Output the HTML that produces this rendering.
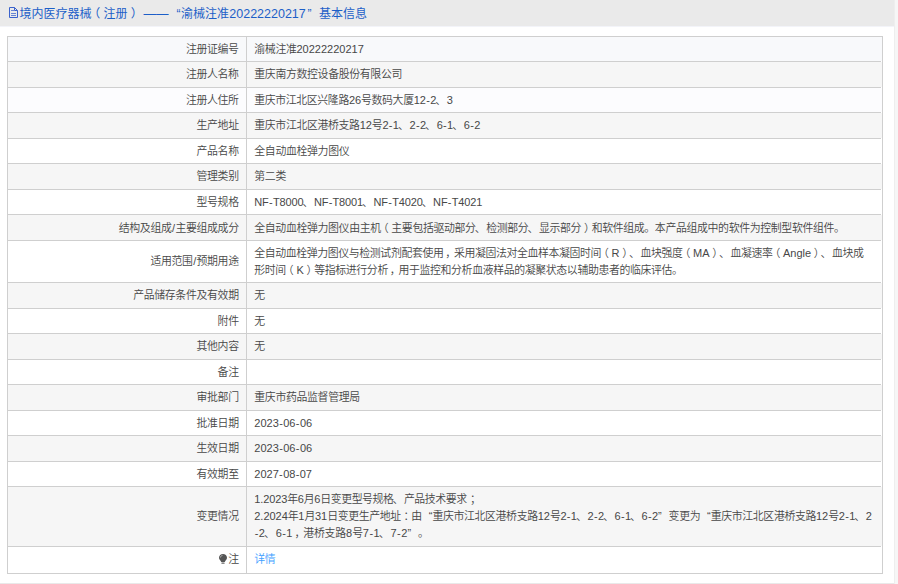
<!DOCTYPE html>
<html lang="zh-CN"><head><meta charset="utf-8"><title>基本信息</title>
<style>
html,body{margin:0;padding:0;background:#fff;}
body{width:898px;height:584px;position:relative;overflow:hidden;font-family:"Liberation Sans","Noto Sans CJK SC",sans-serif;font-size:10.9px;letter-spacing:-0.34px;font-weight:350;color:#474747;text-spacing-trim:space-all;}
.wrap{position:absolute;left:0;top:0;width:894px;height:583px;background:#fff;border-bottom:1px solid #e9e9e9;}
.edge{position:absolute;left:894px;top:0;width:3px;height:584px;background:#f6f6f6;border-left:1px solid #eeeeee;}
.hd{position:absolute;left:0;top:0;width:894px;height:26px;background:#eaeaea;border-bottom:1px solid #f3f4f9;}
.hd .t{position:absolute;left:0;top:0;height:26px;font-size:12px;letter-spacing:0;font-weight:400;color:#1c5fc8;white-space:nowrap;}
.hd .t>span{position:absolute;top:0.6px;transform:translateY(-0.5px);height:26px;line-height:26px;}
.ico{position:absolute;left:9px;top:7px;}
.row{position:absolute;left:7.9px;width:874.1px;}
.lab{position:absolute;left:0;top:0.6px;bottom:-0.6px;width:230.8px;text-align:right;white-space:nowrap;display:flex;align-items:center;justify-content:flex-end;line-height:17px;}
.val{position:absolute;left:246.4px;top:0.6px;bottom:-0.6px;right:0;white-space:nowrap;display:flex;align-items:center;line-height:17px;}
.ln{display:block;white-space:nowrap;}
.hl{position:absolute;height:1px;background:#cfcfcf;}
.vl{position:absolute;width:1px;background:#cfcfcf;}
.en{font-size:11px;}
.hy{padding:0 0.35px;}
.pl{position:relative;left:-0.28em;}
.pr{position:relative;left:0.26em;}
.dn{position:relative;left:-0.09em;}
.sc{position:relative;left:0.3em;}
.co{position:relative;left:0.25em;}
.cm{position:relative;left:0.17em;}
.sl{padding:0 0.6px;}
.lq{display:inline-block;width:10.56px;text-align:right;letter-spacing:0;}
.rq{display:inline-block;width:10.56px;text-align:left;letter-spacing:0;}
a{color:#409eff;text-decoration:none;}
.bulb{display:inline-block;margin-right:1.2px;position:relative;top:-0.7px;}
</style></head><body>
<div class="wrap"></div><div class="edge"></div>
<div class="hd"><svg class="ico" width="9" height="11" viewBox="0 0 9 11"><path d="M0.5 0.5H5.5L8.5 3.5V10.5H0.5Z M5.5 0.5V3.5H8.5" fill="none" stroke="#3a62cc" stroke-width="1"/><path d="M2 3.5H5M2 6.5H7M2 8.5H7" stroke="#3a62cc" stroke-width="1" fill="none" opacity="0.75"/></svg><div class="t"><span style="left:19.5px">境内医疗器械<span class="pl">（</span>注册<span class="pr">）</span></span><span style="left:143.4px;font-size:12.5px">——</span><span style="left:176.4px">“</span><span style="left:181.1px">渝械注准</span><span style="left:229.3px;font-size:12.5px">20222220217</span><span style="left:307.6px">”</span><span style="left:318.9px">基本信息</span></div></div>
<div class="row" style="top:36.9px;height:24.1px;background:#f8f9fb"><div class="lab">注册证编号</div><div class="val"><span class="tx"><span class="ln" id="l0_0" style="letter-spacing:-0.340px">渝械注准<span class="en" style="letter-spacing:0.000px">20222220217</span></span></span></div></div>
<div class="row" style="top:62.0px;height:24.8px;background:#f6f6f6"><div class="lab">注册人名称</div><div class="val"><span class="tx"><span class="ln" id="l1_0" style="letter-spacing:-0.340px">重庆南方数控设备股份有限公司</span></span></div></div>
<div class="row" style="top:87.8px;height:24.2px;background:#fcfcfe"><div class="lab">注册人住所</div><div class="val"><span class="tx"><span class="ln" id="l2_0" style="letter-spacing:-0.378px">重庆市江北区兴隆路<span class="en" style="letter-spacing:-0.038px">26</span>号数码大厦<span class="en" style="letter-spacing:-0.038px">12<span class="hy">-</span>2</span><span class="dn">、</span><span class="en" style="letter-spacing:-0.038px">3</span></span></span></div></div>
<div class="row" style="top:113.0px;height:24.7px;background:#f6f6f6"><div class="lab">生产地址</div><div class="val"><span class="tx"><span class="ln" id="l3_0" style="letter-spacing:-0.355px">重庆市江北区港桥支路<span class="en" style="letter-spacing:-0.015px">12</span>号<span class="en" style="letter-spacing:-0.015px">2<span class="hy">-</span>1</span><span class="dn">、</span><span class="en" style="letter-spacing:-0.015px">2<span class="hy">-</span>2</span><span class="dn">、</span><span class="en" style="letter-spacing:-0.015px">6<span class="hy">-</span>1</span><span class="dn">、</span><span class="en" style="letter-spacing:-0.015px">6<span class="hy">-</span>2</span></span></span></div></div>
<div class="row" style="top:138.7px;height:24.1px;background:#fff"><div class="lab">产品名称</div><div class="val"><span class="tx"><span class="ln" id="l4_0" style="letter-spacing:-0.340px">全自动血栓弹力图仪</span></span></div></div>
<div class="row" style="top:163.8px;height:25.2px;background:#f6f6f6"><div class="lab">管理类别</div><div class="val"><span class="tx"><span class="ln" id="l5_0" style="letter-spacing:-0.340px">第二类</span></span></div></div>
<div class="row" style="top:190.0px;height:24.0px;background:#fff"><div class="lab">型号规格</div><div class="val"><span class="tx"><span class="ln" id="l6_0" style="letter-spacing:-0.469px"><span class="en" style="letter-spacing:-0.129px">NF<span class="hy">-</span>T8000</span><span class="dn">、</span><span class="en" style="letter-spacing:-0.129px">NF<span class="hy">-</span>T8001</span><span class="dn">、</span><span class="en" style="letter-spacing:-0.129px">NF<span class="hy">-</span>T4020</span><span class="dn">、</span><span class="en" style="letter-spacing:-0.129px">NF<span class="hy">-</span>T4021</span></span></span></div></div>
<div class="row" style="top:215.0px;height:24.9px;background:#f6f6f6"><div class="lab">结构及组成<span class="sl">/</span>主要组成成分</div><div class="val"><span class="tx"><span class="ln" id="l7_0" style="letter-spacing:-0.351px">全自动血栓弹力图仪由主机<span class="pl">（</span>主要包括驱动部分<span class="dn">、</span>检测部分<span class="dn">、</span>显示部分<span class="pr">）</span>和软件组成。本产品组成中的软件为控制型软件组件。</span></span></div></div>
<div class="row" style="top:240.9px;height:40.9px;background:#fff"><div class="lab">适用范围<span class="sl">/</span>预期用途</div><div class="val"><span class="tx"><span class="ln" id="l8_0" style="letter-spacing:-0.383px">全自动血栓弹力图仪与检测试剂配套使用<span class="cm">，</span>采用凝固法对全血样本凝固时间<span class="pl">（</span><span class="en" style="letter-spacing:-0.043px">R</span><span class="pr">）</span><span class="dn">、</span>血块强度<span class="pl">（</span><span class="en" style="letter-spacing:-0.043px">MA</span><span class="pr">）</span><span class="dn">、</span>血凝速率<span class="pl">（</span><span class="en" style="letter-spacing:-0.043px">Angle</span><span class="pr">）</span><span class="dn">、</span>血块成</span><span class="ln" id="l8_1" style="letter-spacing:-0.365px">形时间<span class="pl">（</span><span class="en" style="letter-spacing:-0.025px">K</span><span class="pr">）</span>等指标进行分析<span class="cm">，</span>用于监控和分析血液样品的凝聚状态以辅助患者的临床评估。</span></span></div></div>
<div class="row" style="top:282.8px;height:25.2px;background:#f6f6f6"><div class="lab">产品储存条件及有效期</div><div class="val"><span class="tx"><span class="ln" id="l9_0" style="letter-spacing:-0.340px">无</span></span></div></div>
<div class="row" style="top:309.0px;height:23.9px;background:#fff"><div class="lab">附件</div><div class="val"><span class="tx"><span class="ln" id="l10_0" style="letter-spacing:-0.340px">无</span></span></div></div>
<div class="row" style="top:333.9px;height:24.9px;background:#f6f6f6"><div class="lab">其他内容</div><div class="val"><span class="tx"><span class="ln" id="l11_0" style="letter-spacing:-0.340px">无</span></span></div></div>
<div class="row" style="top:359.8px;height:24.0px;background:#fff"><div class="lab">备注</div><div class="val"><span class="tx"></span></div></div>
<div class="row" style="top:384.8px;height:25.2px;background:#f6f6f6"><div class="lab">审批部门</div><div class="val"><span class="tx"><span class="ln" id="l13_0" style="letter-spacing:-0.340px">重庆市药品监督管理局</span></span></div></div>
<div class="row" style="top:411.0px;height:24.0px;background:#fff"><div class="lab">批准日期</div><div class="val"><span class="tx"><span class="ln" id="l14_0" style="letter-spacing:-0.318px"><span class="en" style="letter-spacing:0.022px">2023<span class="hy">-</span>06<span class="hy">-</span>06</span></span></span></div></div>
<div class="row" style="top:436.0px;height:24.7px;background:#f6f6f6"><div class="lab">生效日期</div><div class="val"><span class="tx"><span class="ln" id="l15_0" style="letter-spacing:-0.318px"><span class="en" style="letter-spacing:0.022px">2023<span class="hy">-</span>06<span class="hy">-</span>06</span></span></span></div></div>
<div class="row" style="top:461.7px;height:24.2px;background:#fff"><div class="lab">有效期至</div><div class="val"><span class="tx"><span class="ln" id="l16_0" style="letter-spacing:-0.340px"><span class="en" style="letter-spacing:0.000px">2027<span class="hy">-</span>08<span class="hy">-</span>07</span></span></span></div></div>
<div class="row" style="top:486.9px;height:58.8px;background:#f6f6f6"><div class="lab">变更情况</div><div class="val"><span class="tx"><span class="ln" id="l17_0" style="letter-spacing:-0.440px"><span class="en" style="letter-spacing:-0.100px">1.2023</span>年<span class="en" style="letter-spacing:-0.100px">6</span>月<span class="en" style="letter-spacing:-0.100px">6</span>日变更型号规格<span class="dn">、</span>产品技术要求<span class="sc">；</span></span><span class="ln" id="l17_1" style="letter-spacing:-0.365px"><span class="en" style="letter-spacing:-0.025px">2.2024</span>年<span class="en" style="letter-spacing:-0.025px">1</span>月<span class="en" style="letter-spacing:-0.025px">31</span>日变更生产地址<span class="co">：</span>由<span class="lq">“</span>重庆市江北区港桥支路<span class="en" style="letter-spacing:-0.025px">12</span>号<span class="en" style="letter-spacing:-0.025px">2<span class="hy">-</span>1</span><span class="dn">、</span><span class="en" style="letter-spacing:-0.025px">2<span class="hy">-</span>2</span><span class="dn">、</span><span class="en" style="letter-spacing:-0.025px">6<span class="hy">-</span>1</span><span class="dn">、</span><span class="en" style="letter-spacing:-0.025px">6<span class="hy">-</span>2</span><span class="rq">”</span>变更为<span class="lq">“</span>重庆市江北区港桥支路<span class="en" style="letter-spacing:-0.025px">12</span>号<span class="en" style="letter-spacing:-0.025px">2<span class="hy">-</span>1</span><span class="dn">、</span><span class="en" style="letter-spacing:-0.025px">2</span></span><span class="ln" id="l17_2" style="letter-spacing:-0.226px"><span class="en" style="letter-spacing:0.114px"><span class="hy">-</span>2</span><span class="dn">、</span><span class="en" style="letter-spacing:0.114px">6<span class="hy">-</span>1</span><span class="cm">，</span>港桥支路<span class="en" style="letter-spacing:0.114px">8</span>号<span class="en" style="letter-spacing:0.114px">7<span class="hy">-</span>1</span><span class="dn">、</span><span class="en" style="letter-spacing:0.114px">7<span class="hy">-</span>2</span><span class="rq">”</span>。</span></span></div></div>
<div class="row" style="top:546.7px;height:25.8px;background:#fff"><div class="lab" style="margin-top:-1.0px"><svg class="bulb" width="8" height="10" viewBox="0 0 8 10"><path d="M4 0C6.2 0 8 1.6 8 3.7C8 5.2 7 6.1 6.3 6.9L5.8 8H2.2L1.7 6.9C1 6.1 0 5.2 0 3.7C0 1.6 1.8 0 4 0Z" fill="#555"/><rect x="2.4" y="8.5" width="3.2" height="1.3" rx="0.5" fill="#666"/><path d="M1.5 3.5C1.6 2.3 2.4 1.5 3.5 1.4" fill="none" stroke="#fff" stroke-width="0.7" opacity="0.75"/></svg>注</div><div class="val" style="margin-top:-1.0px"><span class="tx"><span class="ln" id="l18_0" style="letter-spacing:-0.340px"><a>详情</a></span></span></div></div>
<div class="hl" style="left:6.9px;width:876.1px;top:35.9px"></div>
<div class="hl" style="left:6.9px;width:874.1px;top:61.0px"></div>
<div class="hl" style="left:6.9px;width:874.1px;top:86.8px"></div>
<div class="hl" style="left:6.9px;width:874.1px;top:112.0px"></div>
<div class="hl" style="left:6.9px;width:874.1px;top:137.7px"></div>
<div class="hl" style="left:6.9px;width:874.1px;top:162.8px"></div>
<div class="hl" style="left:6.9px;width:874.1px;top:189.0px"></div>
<div class="hl" style="left:6.9px;width:874.1px;top:214.0px"></div>
<div class="hl" style="left:6.9px;width:874.1px;top:239.9px"></div>
<div class="hl" style="left:6.9px;width:874.1px;top:281.8px"></div>
<div class="hl" style="left:6.9px;width:874.1px;top:308.0px"></div>
<div class="hl" style="left:6.9px;width:874.1px;top:332.9px"></div>
<div class="hl" style="left:6.9px;width:874.1px;top:358.8px"></div>
<div class="hl" style="left:6.9px;width:874.1px;top:383.8px"></div>
<div class="hl" style="left:6.9px;width:874.1px;top:410.0px"></div>
<div class="hl" style="left:6.9px;width:874.1px;top:435.0px"></div>
<div class="hl" style="left:6.9px;width:874.1px;top:460.7px"></div>
<div class="hl" style="left:6.9px;width:874.1px;top:485.9px"></div>
<div class="hl" style="left:6.9px;width:874.1px;top:545.7px"></div>
<div class="hl" style="left:6.9px;width:876.1px;top:572.5px"></div>
<div class="vl" style="left:6.9px;top:35.9px;height:537.6px"></div>
<div class="vl" style="left:246.0px;top:35.9px;height:537.6px"></div>
<div class="vl" style="left:882.0px;top:35.9px;height:537.6px"></div>
</body></html>
